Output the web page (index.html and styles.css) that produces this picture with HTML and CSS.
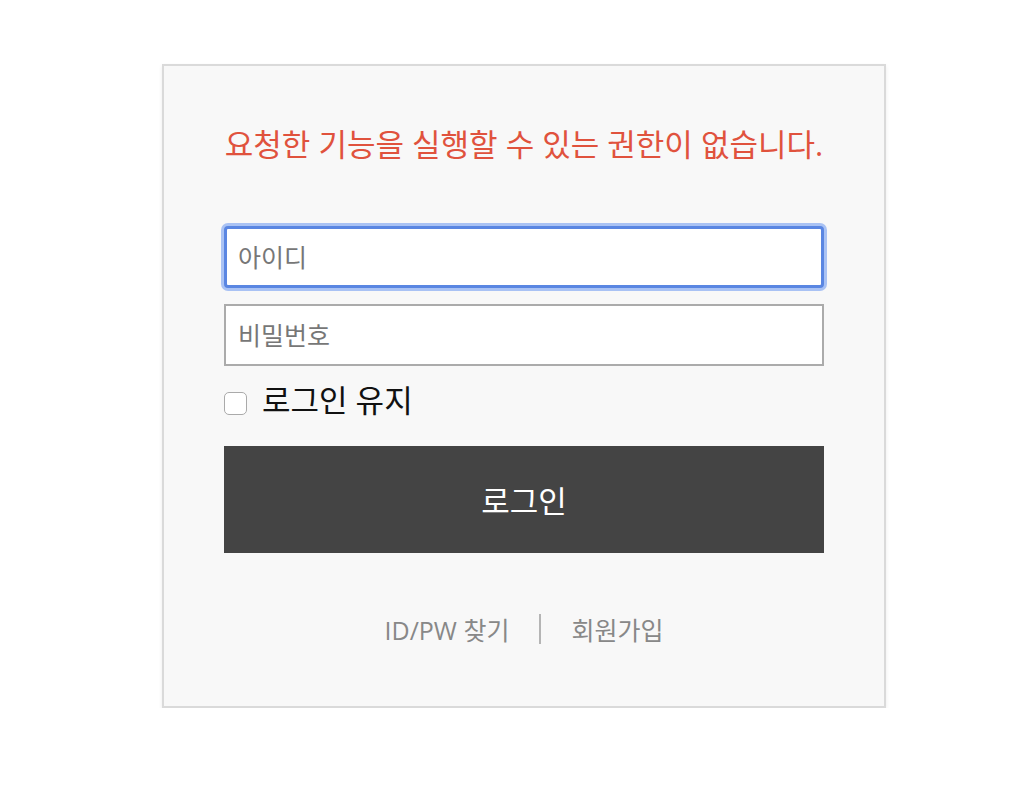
FILE: index.html
```
<!DOCTYPE html>
<html lang="ko">
<head>
  <meta charset="UTF-8">
  <title>로그인</title>
  <link rel="stylesheet" href="styles.css">
</head>
<body>
  <div class="login-box">
    <p class="error-msg">요청한 기능을 실행할 수 있는 권한이 없습니다.</p>
    <form class="login-form">
      <input type="text" class="field focused" placeholder="아이디" autofocus>
      <input type="password" class="field" placeholder="비밀번호">
      <label class="keep">
        <span class="check"></span>
        <span>로그인 유지</span>
      </label>
      <button type="button" class="login-btn">로그인</button>
    </form>
    <div class="links">
      <a href="#">ID/PW 찾기</a>
      <span class="sep"></span>
      <a href="#">회원가입</a>
    </div>
  </div>
</body>
</html>
```

FILE: styles.css
```
body {
  margin: 0;
  background: #fff;
  font-family: "Open Sans", "Noto Sans CJK KR", sans-serif;
}
.login-box {
  box-sizing: border-box;
  width: 724px;
  margin: 64px 0 0 162px;
  padding: 52px 60px 59px;
  background: #f8f8f8;
  border: 2px solid #dadada;
  box-shadow: 0 2px 4px rgba(0, 0, 0, 0.08);
}
.error-msg {
  margin: 0 0 56px;
  font-size: 31px;
  line-height: 52px;
  color: #e0523d;
  text-align: center;
  white-space: nowrap;
}
.login-form {
  display: flex;
  flex-direction: column;
}
.field {
  box-sizing: border-box;
  height: 62px;
  width: 600px;
  margin-bottom: 16px;
  padding: 0 12px;
  font-family: "Open Sans", "Noto Sans CJK KR", sans-serif;
  font-size: 25px;
  background: #fff;
  border: 2px solid #ababab;
  outline: none;
}
.field::placeholder {
  color: #777;
}
.field.focused {
  border: 3px solid #5a86e2;
  border-radius: 4px;
  box-shadow: 0 0 0 3px #a9c2f4;
  padding-left: 11px;
}
.keep {
  display: flex;
  align-items: center;
  gap: 15px;
  height: 44px;
  margin-top: -6px;
  font-size: 31px;
  color: #111;
}
.check {
  width: 23px;
  height: 23px;
  box-sizing: border-box;
  border: 1px solid #aaa;
  border-radius: 5px;
  background: #fff;
  margin-top: 10px;
}
.login-btn {
  height: 107px;
  margin-top: 26px;
  border: none;
  background: #444;
  color: #fff;
  font-family: "Open Sans", "Noto Sans CJK KR", sans-serif;
  font-size: 31px;
}
.links {
  display: flex;
  justify-content: center;
  align-items: center;
  gap: 30px;
  margin-top: 58px;
  font-size: 25px;
}
.links a {
  color: #888;
  text-decoration: none;
}
.sep {
  width: 2px;
  height: 30px;
  background: #b5b5b5;
}
```
